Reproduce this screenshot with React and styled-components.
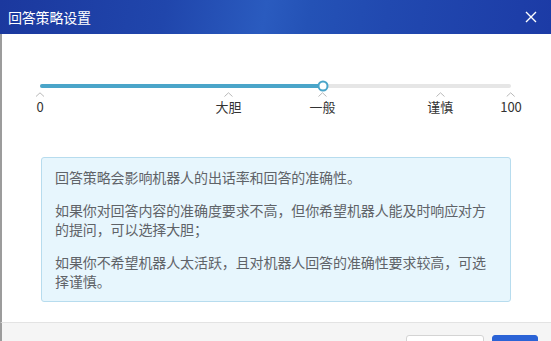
import React from "react";
import styled, { createGlobalStyle } from "styled-components";

const GlobalStyle = createGlobalStyle`
  body {
    margin: 0;
    background: #ffffff;
    font-family: "Noto Sans CJK SC", "Noto Sans", sans-serif;
    overflow: hidden;
  }
`;

const Dialog = styled.div`
  width: 551px;
  height: 341px;
  overflow: hidden;
  display: flex;
  flex-direction: column;
  background: #fff;
`;

const Header = styled.div`
  height: 34px;
  flex: none;
  display: flex;
  align-items: center;
  justify-content: space-between;
  padding: 0 14px 0 8px;
  background: linear-gradient(
    100deg,
    #1b389e 0%,
    #2046ac 30%,
    #2a5bbf 48%,
    #2452b6 56%,
    #2149b0 70%,
    #1c3ba6 100%
  );
`;

const Title = styled.span`
  color: #fff;
  font-size: 14px;
  letter-spacing: -0.2px;
`;

const Close = styled.button`
  border: 0;
  padding: 0;
  background: none;
  width: 12px;
  height: 12px;
  display: flex;
  cursor: pointer;
`;

const Body = styled.div`
  height: 288px;
  flex: none;
  box-sizing: border-box;
  border-left: 2px solid #9c9c9c;
  padding: 50px 40px 0 38px;
  display: flex;
  flex-direction: column;
`;

const Slider = styled.div`
  position: relative;
  height: 73px;
`;

const Track = styled.div`
  position: relative;
  height: 4px;
  border-radius: 2px;
  background: #e6e6e6;
`;

const Fill = styled.div`
  height: 100%;
  border-radius: 2px;
  background: #4aa5c9;
`;

const Handle = styled.div`
  position: absolute;
  top: 50%;
  width: 11px;
  height: 11px;
  box-sizing: border-box;
  border: 2px solid #4aa5c9;
  border-radius: 50%;
  background: #fff;
  transform: translate(-50%, -50%);
`;

const Mark = styled.div`
  position: absolute;
  top: 8px;
  display: flex;
  flex-direction: column;
  align-items: center;
  transform: translateX(-50%);
`;

const MarkLabel = styled.span`
  margin-top: 2px;
  font-size: 13px;
  line-height: 16px;
  color: #333;
  white-space: nowrap;
`;

const Notice = styled.div`
  margin-left: 1px;
  border: 1px solid #b7dcee;
  border-radius: 3px;
  background: #e7f6fd;
  padding: 10px 18px 10px 13px;
`;

const Para = styled.p`
  margin: 0;
  font-size: 14px;
  line-height: 19px;
  color: #5f6368;
  letter-spacing: -0.1px;

  & + & {
    margin-top: 14px;
  }
`;

const Footer = styled.div`
  height: 28px;
  flex: none;
  border-left: 2px solid #9c9c9c;
  border-top: 1px solid #e3e3e3;
  background: #f5f5f5;
  padding: 12px 13px 0 0;
  display: flex;
  justify-content: flex-end;
  gap: 8px;
`;

const Button = styled.button`
  width: ${(p) => (p.primary ? "46px" : "78px")};
  height: 28px;
  flex: none;
  border-radius: 3px;
  border: 1px solid ${(p) => (p.primary ? "#2b63d6" : "#d4d4d4")};
  background: ${(p) => (p.primary ? "#2b63d6" : "#fff")};
`;

const marks = [
  { value: 0, label: "0" },
  { value: 40, label: "大胆" },
  { value: 60, label: "一般" },
  { value: 85, label: "谨慎" },
  { value: 100, label: "100" },
];

const Caret = () => (
  <svg width="9" height="5" viewBox="0 0 9 5">
    <polyline points="0.5,4.5 4.5,0.8 8.5,4.5" fill="none" stroke="#b9b9b9" strokeWidth="1" />
  </svg>
);

export default function App() {
  const value = 60;
  return (
    <>
      <GlobalStyle />
      <Dialog>
        <Header>
          <Title>回答策略设置</Title>
          <Close aria-label="关闭">
            <svg width="12" height="12" viewBox="0 0 12 12">
              <path d="M1 1L11 11M11 1L1 11" stroke="#fff" strokeWidth="1.4" />
            </svg>
          </Close>
        </Header>
        <Body>
          <Slider>
            <Track>
              <Fill style={{ width: `${value}%` }} />
              <Handle style={{ left: `${value}%` }} />
            </Track>
            {marks.map((m) => (
              <Mark key={m.label} style={{ left: `${m.value}%` }}>
                <Caret />
                <MarkLabel>{m.label}</MarkLabel>
              </Mark>
            ))}
          </Slider>
          <Notice>
            <Para>回答策略会影响机器人的出话率和回答的准确性。</Para>
            <Para>
              如果你对回答内容的准确度要求不高，但你希望机器人能及时响应对方的提问，可以选择大胆；
            </Para>
            <Para>
              如果你不希望机器人太活跃，且对机器人回答的准确性要求较高，可选
              <br />
              择谨慎。
            </Para>
          </Notice>
        </Body>
        <Footer>
          <Button />
          <Button primary />
        </Footer>
      </Dialog>
    </>
  );
}
